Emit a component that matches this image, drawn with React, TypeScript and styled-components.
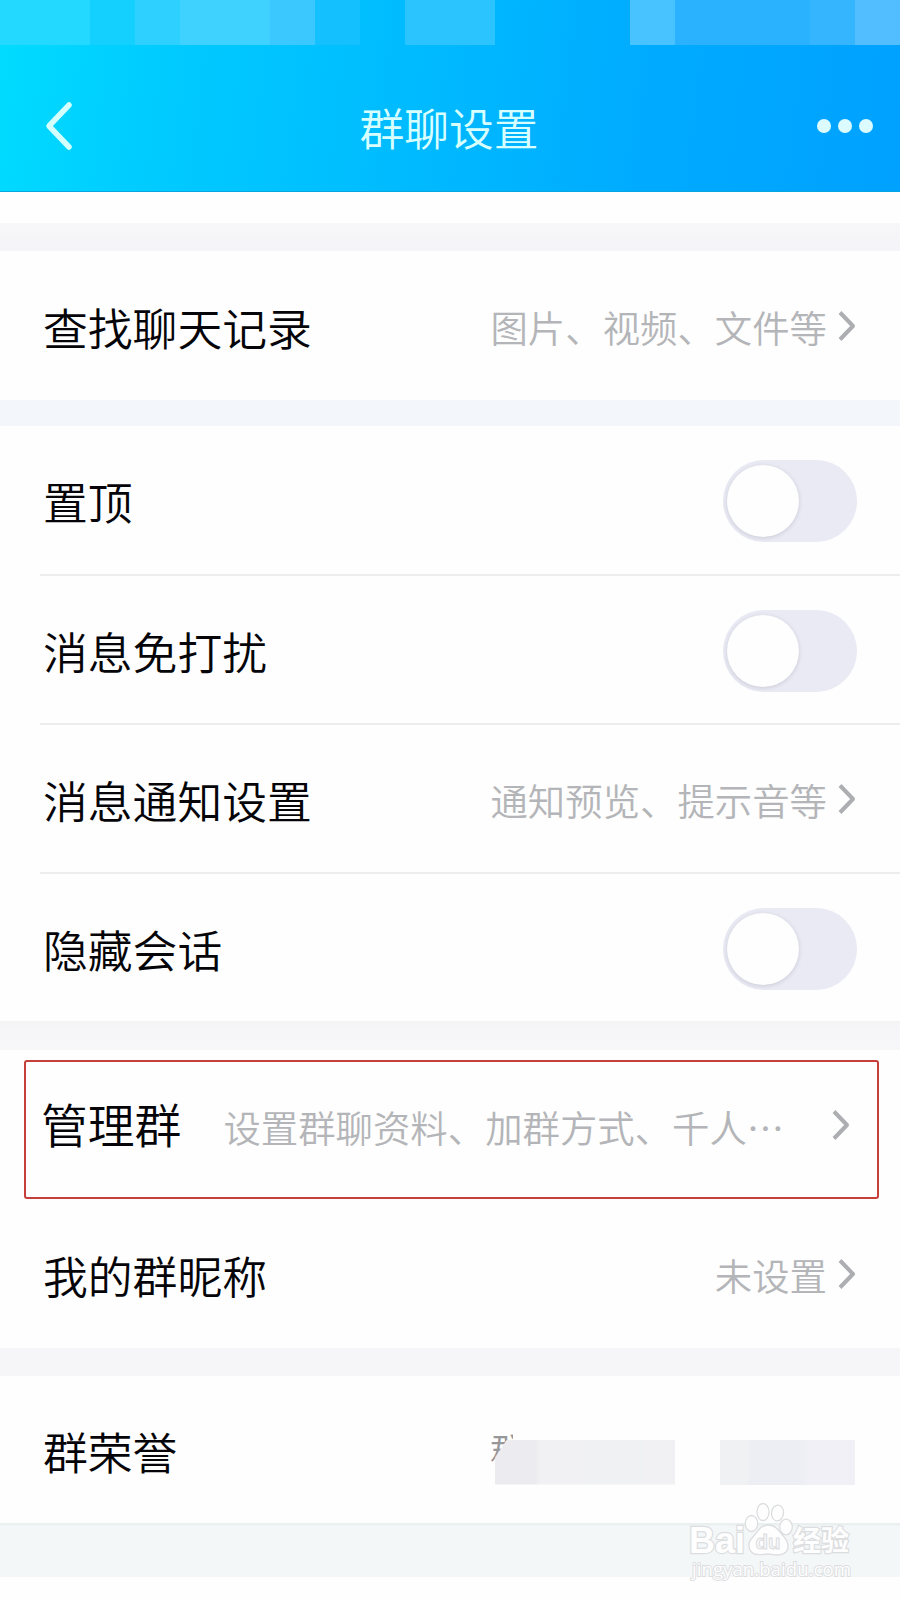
import React from "react";
import styled, { createGlobalStyle } from "styled-components";

const GlobalStyle = createGlobalStyle`
  *, *::before, *::after { box-sizing: border-box; }
  body {
    margin: 0;
    background: #fefefe;
    font-family: "Noto Sans CJK SC", sans-serif;
  }
`;

const Screen = styled.main`
  position: relative;
  width: 900px;
  height: 1600px;
  overflow: hidden;
  display: flex;
  flex-direction: column;
  background: #fefefe;
`;

const Header = styled.header`
  height: 192px;
  flex: none;
  display: flex;
  flex-direction: column;
  background: linear-gradient(97deg, #00dcff 0%, #00ccff 17%, #00bdff 42%, #00abff 72%, #00a1ff 100%);
  border-bottom: 1px solid #08a6e0;
`;

const StatusBar = styled.div`
  height: 45px;
  display: flex;
`;

const StatusBlock = styled.span<{ $w: number; $color: string }>`
  width: ${(p) => p.$w}px;
  background: ${(p) => p.$color};
`;

const NavBar = styled.div`
  height: 146px;
  display: grid;
  grid-template-columns: 62px 1fr 82px;
  align-items: center;
  padding: 16px 27px 0 45px;
`;

const Title = styled.h1`
  margin: 0;
  padding-top: 1px;
  justify-self: center;
  font-size: 44.8px;
  line-height: 60px;
  font-weight: 350;
  color: #d8ffff;
`;

const Dots = styled.div`
  display: flex;
  gap: 7px;
  justify-content: flex-end;
`;

const Dot = styled.i`
  width: 14px;
  height: 14px;
  border-radius: 50%;
  background: #dcfbff;
`;

const Gap = styled.div<{ $h: number; $bg: string }>`
  height: ${(p) => p.$h}px;
  flex: none;
  background: ${(p) => p.$bg};
`;

const Group = styled.section`
  display: flex;
  flex-direction: column;
  flex: none;
`;

const Row = styled.div<{ $h?: number; $divided?: boolean }>`
  height: ${(p) => p.$h ?? 149}px;
  margin-left: 40px;
  padding: 0 43px 0 3px;
  display: flex;
  align-items: center;
  justify-content: space-between;
  border-bottom: ${(p) => (p.$divided ? "2px solid #ededee" : "0")};
`;

const Highlight = styled.div`
  height: 139px;
  margin: 10px 21px 0 24px;
  padding: 0 26px 9px 15px;
  display: flex;
  align-items: center;
  border: 2px solid #c5403a;
  border-radius: 3px;
`;

const Label = styled.span<{ $size?: number; $lift?: number }>`
  padding-top: 2px;
  padding-bottom: ${(p) => p.$lift ?? 0}px;
  font-size: ${(p) => p.$size ?? 44.8}px;
  line-height: 60px;
  font-weight: 350;
  color: #050509;
  white-space: nowrap;
`;

const Trailing = styled.div<{ $grow?: boolean }>`
  display: flex;
  align-items: center;
  gap: 10px;
  ${(p) => p.$grow && "flex: 1; justify-content: space-between; margin-left: 42px;"}
`;

const Value = styled.span`
  padding-top: 3px;
  font-size: 37.4px;
  line-height: 50px;
  font-weight: 350;
  color: #b4b5b8;
  white-space: nowrap;
`;

const Track = styled.div`
  width: 134px;
  height: 82px;
  margin-top: 2px;
  padding: 5px 4px;
  border-radius: 41px;
  background: #e9eaf3;
`;

const Knob = styled.div`
  width: 72px;
  height: 72px;
  border-radius: 50%;
  background: #fefefe;
  box-shadow: 0 1px 4px rgba(90, 90, 110, 0.22);
`;

const Honor = styled.div`
  position: relative;
  width: 367px;
  margin-top: 25px;
  display: flex;
  align-items: flex-start;
`;

const HonorText = styled(Value)`
  position: absolute;
  left: 0;
  top: -15px;
  padding: 0;
  color: #97989b;
  clip-path: polygon(0 0, 23px 0, 23px 14px, 16px 20px, 2px 38px, 0 38px);
`;

const Mask = styled.div<{ $w: number; $ml: number; $bg: string; $clip?: string }>`
  width: ${(p) => p.$w}px;
  height: 45px;
  margin-left: ${(p) => p.$ml}px;
  background: ${(p) => p.$bg};
  clip-path: ${(p) => p.$clip ?? "none"};
`;

const Watermark = styled.svg`
  position: absolute;
  left: 680px;
  top: 1495px;
`;

const statusBlocks: [number, string][] = [
  [90, "#24d9ff"],
  [45, "#14d0ff"],
  [45, "#2ed0ff"],
  [90, "#40d2ff"],
  [45, "#3bc8ff"],
  [45, "#15c0ff"],
  [45, "transparent"],
  [90, "#2cc4ff"],
  [135, "transparent"],
  [45, "#48c3ff"],
  [135, "#2bb2ff"],
  [45, "#36b5ff"],
  [45, "#52bdff"],
];

const Chevron = () => (
  <svg width="20" height="32" viewBox="0 0 20 32" fill="none">
    <path d="M3 2.5 L16 16 L3 29.5" stroke="#adaeb1" strokeWidth="4" strokeLinecap="butt" strokeLinejoin="round" />
  </svg>
);

const Toggle = () => (
  <Track role="switch" aria-checked="false">
    <Knob />
  </Track>
);

const Link = ({ text }: { text: string }) => (
  <Trailing>
    <Value>{text}</Value>
    <Chevron />
  </Trailing>
);

const App = () => (
  <>
    <GlobalStyle />
    <Screen>
      <Header>
        <StatusBar>
          {statusBlocks.map(([w, c], i) => (
            <StatusBlock key={i} $w={w} $color={c} />
          ))}
        </StatusBar>
        <NavBar>
          <svg width="30" height="52" viewBox="0 0 30 52" fill="none">
            <path d="M24 5 L4 26 L24 47" stroke="#d4ffff" strokeWidth="5.5" strokeLinecap="round" strokeLinejoin="round" />
          </svg>
          <Title>群聊设置</Title>
          <Dots>
            <Dot />
            <Dot />
            <Dot />
          </Dots>
        </NavBar>
      </Header>
      <Gap $h={31} $bg="#fefefe" />
      <Gap $h={28} $bg="linear-gradient(#f7f7f8, #f4f4f9)" />
      <Group>
        <Row>
          <Label>查找聊天记录</Label>
          <Link text="图片、视频、文件等" />
        </Row>
      </Group>
      <Gap $h={26} $bg="#f3f6fb" />
      <Group>
        <Row $h={150} $divided>
          <Label>置顶</Label>
          <Toggle />
        </Row>
        <Row $divided>
          <Label>消息免打扰</Label>
          <Toggle />
        </Row>
        <Row $divided>
          <Label>消息通知设置</Label>
          <Link text="通知预览、提示音等" />
        </Row>
        <Row $h={147}>
          <Label>隐藏会话</Label>
          <Toggle />
        </Row>
      </Group>
      <Gap $h={29} $bg="linear-gradient(#f4f4f4, #f6f6f9 30%, #f7f7fa)" />
      <Group>
        <Highlight>
          <Label $size={46.8} $lift={7}>管理群</Label>
          <Trailing $grow>
            <Value>设置群聊资料、加群方式、千人⋯</Value>
            <Chevron />
          </Trailing>
        </Highlight>
        <Row>
          <Label>我的群昵称</Label>
          <Link text="未设置" />
        </Row>
      </Group>
      <Gap $h={28} $bg="#f6f6f8" />
      <Group>
        <Row $h={147}>
          <Label>群荣誉</Label>
          <Honor>
            <HonorText>群</HonorText>
            <Mask
              $w={180}
              $ml={5}
              $clip="polygon(12px 0, 100% 0, 100% 100%, 0 100%, 0 18px)"
              $bg="linear-gradient(90deg, #ececf0 0 40px, #f1f1f3 46px 90px, #eff1f2 92px 145px, #f1f1f3 150px)"
            />
            <Mask $w={135} $ml={45} $bg="linear-gradient(90deg, #eff1f2 0 27px, #eceef3 30px 78px, #f1f0f7 90px)" />
          </Honor>
        </Row>
      </Group>
      <Gap $h={54} $bg="linear-gradient(#eaefef 0 2px, #f3f7f8 3px)" />

      <Watermark width="190" height="95" viewBox="680 1495 190 95">
        <g fill="#fefefe" stroke="#dcdddf" strokeWidth="2.4" paintOrder="stroke">
          <text x="689" y="1553" fontFamily="Liberation Sans, sans-serif" fontWeight="700" fontSize="36" textLength="56" lengthAdjust="spacingAndGlyphs">
            Bai
          </text>
          <text x="793" y="1551" fontFamily="Noto Sans CJK SC, sans-serif" fontWeight="700" fontSize="28" textLength="56" lengthAdjust="spacingAndGlyphs">
            经验
          </text>
          <text x="692" y="1576" fontFamily="Open Sans, sans-serif" fontSize="18" strokeWidth="1.8" textLength="159" lengthAdjust="spacingAndGlyphs">
            jingyan.baidu.com
          </text>
        </g>
        <g fill="#fefefe" stroke="#dcdddf" strokeWidth="1.3">
          <ellipse cx="751.5" cy="1523.5" rx="6.2" ry="8" />
          <ellipse cx="763" cy="1512" rx="6" ry="8.5" />
          <ellipse cx="777.5" cy="1513" rx="6" ry="8" transform="rotate(8 777.5 1513)" />
          <ellipse cx="786" cy="1527" rx="6.3" ry="7.8" />
          <path d="M768 1525 C760 1525 757 1533 752 1538 C747 1543 748 1554 757 1554.5 C762 1555 764 1554 768 1554 C773 1554 776 1556 781 1554.5 C789 1553 790 1544 785 1538 C779 1532 777 1525 768 1525 Z" />
          <text x="755.5" y="1549" fontFamily="Liberation Sans, sans-serif" fontWeight="700" fontSize="21" textLength="25" lengthAdjust="spacingAndGlyphs" strokeWidth="1" fill="#f6f7f8">
            du
          </text>
        </g>
      </Watermark>
    </Screen>
  </>
);

export default App;
